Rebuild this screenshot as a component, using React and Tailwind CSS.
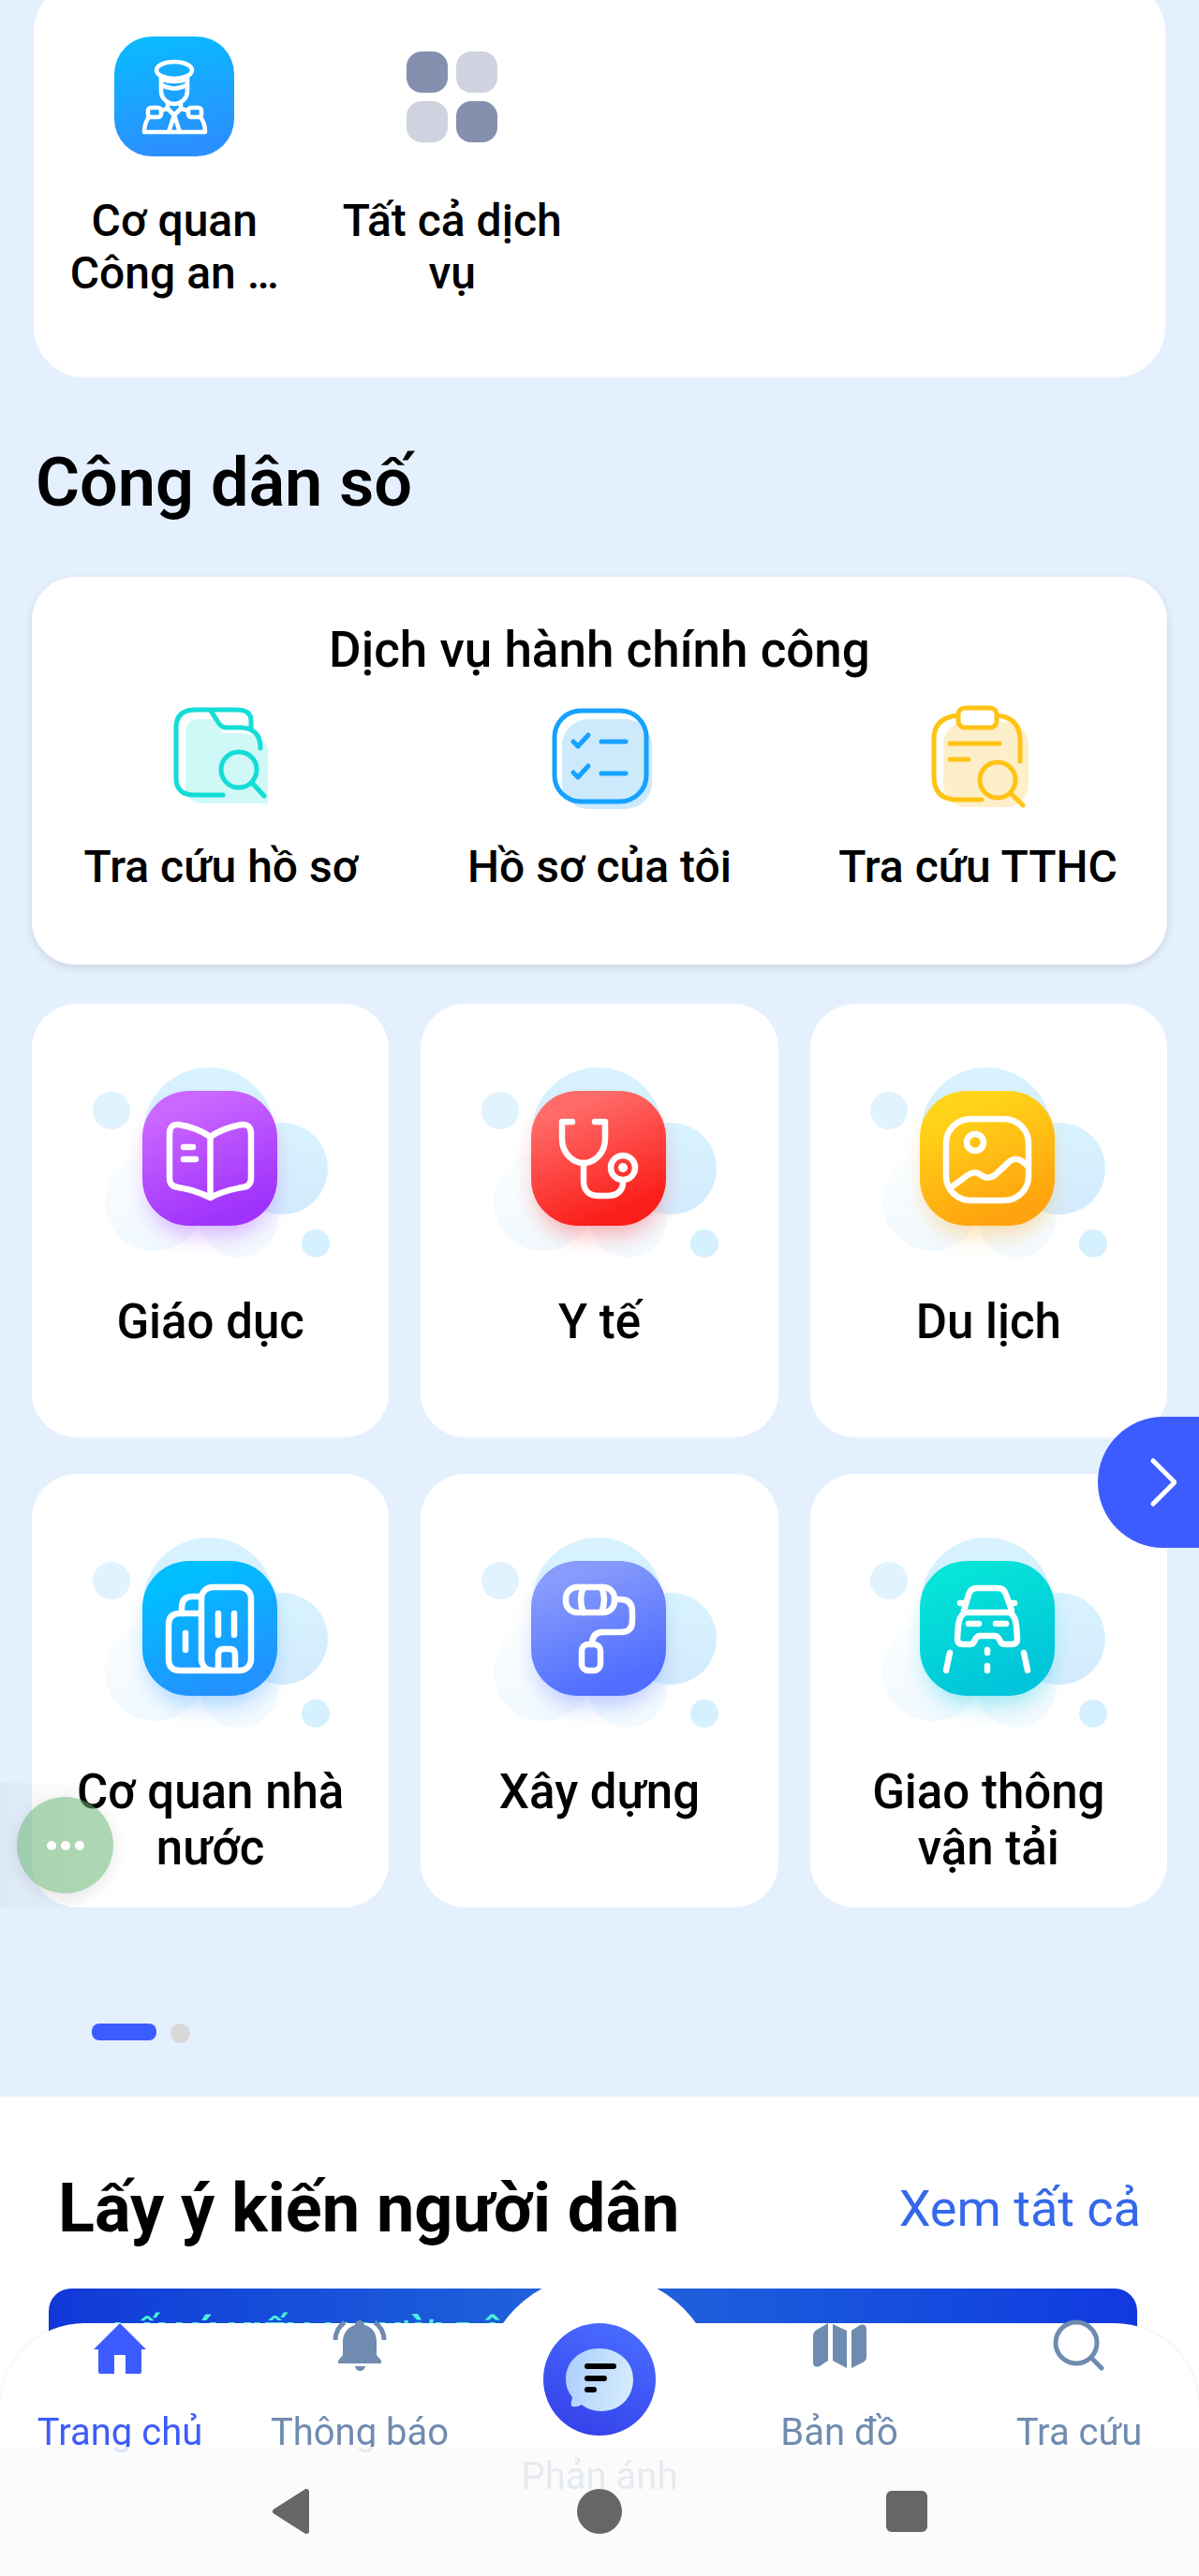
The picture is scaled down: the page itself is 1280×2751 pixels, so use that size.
import React from "react";

const services = [
  { label: "Giáo dục", from: "#cb66ff", to: "#a033fb", art: <BookArt /> },
  { label: "Y tế", from: "#ff6b68", to: "#fb1e1a", art: <StethoscopeArt /> },
  { label: "Du lịch", from: "#ffd51a", to: "#ffa30e", art: <PhotoArt /> },
  { label: "Cơ quan nhà nước", from: "#00bfff", to: "#2292ff", art: <BuildingArt /> },
  { label: "Xây dựng", from: "#869bfb", to: "#4f6dff", art: <RollerArt /> },
  { label: "Giao thông vận tải", from: "#06e3d8", to: "#01c5da", art: <CarArt /> },
];

function BookArt() {
  return (
    <>
      <path d="M189.5 142C178 134 168 131 156 129Q146 128 146 139V186Q146 195 155 196Q174 199 189.5 207Q205 199 224 196Q233 195 233 186V139Q233 128 223 129C211 131 201 134 189.5 142V207" />
      <path d="M161 153H171M161 166H174" />
    </>
  );
}

function StethoscopeArt() {
  return (
    <>
      <path d="M161 126H150V144C150 160 162 170 173 170C184 170 196 160 196 144V126H185" />
      <path d="M173 170V190C173 200 180 205 189 205H199C209 205 215 199 215 191" />
      <circle cx="215" cy="175" r="13" />
      <circle cx="215" cy="175" r="5" fill="#fff" stroke="none" />
    </>
  );
}

function PhotoArt() {
  return (
    <>
      <rect x="145" y="123" width="88" height="87" rx="26" />
      <circle cx="176" cy="148" r="9" />
      <path d="M149 197L168 183Q175 178 181 182L184 184Q190 188 197 183L212 169Q219 163 226 168L232 173" />
    </>
  );
}

function BuildingArt() {
  return (
    <>
      <rect x="180" y="121" width="53" height="89" rx="12" />
      <path d="M180 149H157Q145 149 145 161V198Q145 210 157 210H192" />
      <path d="M159 149V143Q159 131 170 131H180" />
      <path d="M198 149V172M215 149V172M163 170V188" />
      <path d="M198 210V193Q198 187 204 187H210Q216 187 216 193V210" />
    </>
  );
}

function RollerArt() {
  return (
    <>
      <rect x="154" y="121" width="52" height="27" rx="12" />
      <path d="M173 121Q167 134 173 148M192 121Q198 134 192 148" />
      <path d="M207 134H212Q225 134 225 147V157Q225 169 213 169H194Q182 169 182 182" />
      <rect x="171" y="182" width="20" height="28" rx="7" />
    </>
  );
}

function CarArt() {
  return (
    <>
      <path d="M164 146L169 129Q171 122 178 122H200Q207 122 209 129L215 146" />
      <path d="M165 148H213Q219 152 220 162L221 176Q221 182 215 182H208Q204 182 203 179L202 177Q200 173 197 173H181Q178 173 176 177L175 179Q174 182 170 182H163Q157 182 157 176L158 162Q159 152 165 148Z" />
      <path d="M160 138H165M218 138H213M169 160H180M198 160H209" />
      <path d="M149 191L145 210M228 191L232 210M189 188V191M189 205V210" />
    </>
  );
}

function ServiceArt({ id, from, to, children }) {
  return (
    <svg aria-hidden="true" viewBox="50 60 280 220" className="h-[220px] w-[280px]">
      <defs>
        <linearGradient id={`tile-${id}`} x1="0.3" y1="0" x2="0.7" y2="1">
          <stop offset="0.1" stopColor={from} />
          <stop offset="0.9" stopColor={to} />
        </linearGradient>
        <linearGradient id={`blob-${id}`} x1="0" y1="0" x2="0" y2="1">
          <stop offset="0" stopColor="#d8f3ff" />
          <stop offset="1" stopColor="#d3ebfd" />
        </linearGradient>
        <linearGradient id={`pale-${id}`} x1="0" y1="0" x2="0" y2="1">
          <stop offset="0" stopColor="#fbfeff" />
          <stop offset="1" stopColor="#f1f9ff" />
        </linearGradient>
        <filter id={`glow-${id}`} x="-40%" y="-40%" width="180%" height="180%">
          <feGaussianBlur stdDeviation="12" />
        </filter>
      </defs>
      <circle cx="84" cy="114" r="20" fill="#e0f3fe" />
      <circle cx="130" cy="211" r="53" fill={`url(#pale-${id})`} />
      <circle cx="220" cy="229" r="42" fill="#f3faff" />
      <circle cx="188" cy="138" r="70" fill={`url(#blob-${id})`} />
      <circle cx="266" cy="176" r="49" fill={`url(#blob-${id})`} />
      <circle cx="302" cy="256" r="15" fill="#d5f0fe" />
      <rect x="123" y="112" width="132" height="134" rx="46" fill={to} opacity="0.36" filter={`url(#glow-${id})`} />
      <rect x="117" y="93" width="144" height="144" rx="50" fill={`url(#tile-${id})`} />
      <g fill="none" stroke="#fff" strokeWidth="6.5" strokeLinecap="round" strokeLinejoin="round">
        {children}
      </g>
    </svg>
  );
}

function PoliceIcon() {
  return (
    <svg aria-hidden="true" viewBox="0 0 128 128" className="size-32">
      <defs>
        <linearGradient id="police" x1="0" y1="0" x2="0.2" y2="1">
          <stop offset="0" stopColor="#08bdff" />
          <stop offset="1" stopColor="#2a90ff" />
        </linearGradient>
      </defs>
      <rect width="128" height="128" rx="40" fill="url(#police)" />
      <g fill="none" stroke="#fff" strokeWidth="4.6" strokeLinecap="round" strokeLinejoin="round">
        <ellipse cx="64" cy="36" rx="19" ry="9" />
        <path d="M50 42V58C50 67 58 72 64 72C70 72 78 67 78 58V42" />
        <path d="M51 46Q64 50 77 46M51 52Q64 59 77 52" />
        <path d="M57 70V77L64 84L71 77V70M57 77L50 79M71 77L78 79" />
        <rect x="36" y="76" width="14" height="10" rx="3" />
        <rect x="79" y="76" width="14" height="10" rx="3" />
        <path d="M37 86Q32 93 32 102H97Q97 93 92 86M64 84L58 102M64 84L70 102" />
      </g>
    </svg>
  );
}

function AllServicesIcon() {
  return (
    <div aria-hidden="true" className="grid size-32 grid-cols-[44px_44px] grid-rows-[44px_44px] place-content-center gap-[9px]">
      <span className="rounded-2xl bg-[#858fae]" />
      <span className="rounded-2xl bg-[#cfd3df]" />
      <span className="rounded-2xl bg-[#cfd3df]" />
      <span className="rounded-2xl bg-[#858fae]" />
    </div>
  );
}

function FolderIcon() {
  return (
    <svg aria-hidden="true" viewBox="0 0 112 112" className="size-28">
      <path d="M18 30Q18 15 33 15H48L58 30H76Q106 32 106 50V105H38Q18 105 18 86Z" fill="#cff8f6" />
      <g fill="none" stroke="#14dcd6" strokeWidth="5" strokeLinecap="round" strokeLinejoin="round">
        <path d="M58 96H28Q8 96 8 78V24Q8 5 28 5H72Q88 5 88 16V24" />
        <path d="M45 6L54 20Q57 24 62 24H78Q98 25 98 46" />
        <circle cx="75" cy="69" r="19" />
        <path d="M89 83L102 97" />
      </g>
    </svg>
  );
}

function ChecklistIcon() {
  return (
    <svg aria-hidden="true" viewBox="0 0 112 112" className="size-28">
      <rect x="16" y="15" width="96" height="96" rx="28" fill="#cdeafd" />
      <g fill="none" stroke="#16a2ff" strokeWidth="5" strokeLinecap="round" strokeLinejoin="round">
        <rect x="8" y="6" width="98" height="97" rx="28" />
        <path d="M28 39L33 44L44 32M58 39H84M28 72L33 77L44 65M58 73H84" />
      </g>
    </svg>
  );
}

function ClipboardIcon() {
  return (
    <svg aria-hidden="true" viewBox="0 0 112 112" className="size-28">
      <rect x="19" y="18" width="91" height="91" rx="24" fill="#feefcb" />
      <g fill="none" stroke="#ffc315" strokeWidth="5" strokeLinecap="round" strokeLinejoin="round">
        <path d="M60 101H34Q9 101 9 76V36Q9 14 34 11M76 11Q101 13 101 38V60" />
        <rect x="35" y="3" width="41" height="21" rx="7" fill="#fff" />
        <path d="M26 41H79M26 58H46" />
        <circle cx="77" cy="80" r="19" />
        <path d="M91 94L104 107" />
      </g>
    </svg>
  );
}

const tabs = [
  {
    label: "Trang chủ",
    active: true,
    icon: <path d="M28 4L56 32H51V56Q51 58 49 58H34V38H22V58H7Q5 58 5 56V32H0Z" fill="currentColor" />,
  },
  {
    label: "Thông báo",
    icon: (
      <g fill="currentColor">
        <path d="M28 1C31 1 33 3 33 6C42 8 46 15 46 24V38L51 44V47H5V44L10 38V24C10 15 15 8 23 6C23 3 25 1 28 1Z" />
        <path d="M23 50H34Q33 55 28 55Q24 55 23 50Z" />
        <path d="M12 3Q2 10 2 22M44 3Q54 10 54 22" fill="none" stroke="currentColor" strokeWidth="5" />
      </g>
    ),
  },
  null,
  {
    label: "Bản đồ",
    icon: (
      <g fill="currentColor">
        <path d="M16 4V44L7 50Q0 52 0 46V18Q0 13 4 11Z" />
        <path d="M21 5L36 12V52L21 44Z" />
        <path d="M41 12L50 6Q57 4 57 11V40Q57 44 53 46L41 52Z" />
      </g>
    ),
  },
  {
    label: "Tra cứu",
    icon: (
      <g fill="none" stroke="currentColor" strokeWidth="5" strokeLinecap="round">
        <circle cx="25" cy="25" r="22" />
        <path d="M41 41L52 52" />
      </g>
    ),
  },
];

function FeedbackIcon() {
  return (
    <svg aria-hidden="true" viewBox="0 0 120 120" className="size-[120px]">
      <defs>
        <linearGradient id="fb" x1="0.7" y1="0" x2="0.3" y2="1">
          <stop offset="0" stopColor="#4a6cff" />
          <stop offset="1" stopColor="#3442ea" />
        </linearGradient>
        <linearGradient id="bubble" x1="0" y1="0" x2="1" y2="0.2">
          <stop offset="0" stopColor="#a9cdfd" />
          <stop offset="1" stopColor="#d3eafd" />
        </linearGradient>
      </defs>
      <circle cx="60" cy="60" r="60" fill="url(#fb)" />
      <path d="M60 27C79 27 96 40 96 60C96 80 81 94 62 94C53 94 46 91 41 87Q36 90 31 89Q29 88 30 84L31 79Q24 71 24 60C24 40 40 27 60 27Z" fill="url(#bubble)" />
      <path d="M47 46H75M47 59H65M47 71H54" fill="none" stroke="#000" strokeWidth="6" strokeLinecap="round" />
    </svg>
  );
}

function TabBar() {
  return (
    <nav className="fixed inset-x-0 bottom-0 h-[270px]">
      <div className="absolute left-1/2 top-[-53px] size-[254px] -translate-x-1/2 rounded-full bg-white" />
      <div className="absolute inset-0 rounded-t-[90px] bg-white shadow-[0_0_3px_rgba(0,0,0,0.12)] [clip-path:inset(0)]" />
      <div className="relative grid grid-cols-5 text-[40px] leading-12">
        {tabs.map((tab) =>
          tab ? (
            <a
              key={tab.label}
              href="#"
              className={
                tab.active
                  ? "-mt-1 flex flex-col items-center gap-[37px] text-[#3d5cff]"
                  : "-mt-1 flex flex-col items-center gap-[37px] text-[#6f8bb0]"
              }
            >
              <svg aria-hidden="true" viewBox="0 0 56 60" className="h-15 w-14 overflow-visible">
                {tab.icon}
              </svg>
              {tab.label}
            </a>
          ) : (
            <a key="feedback" href="#" className="flex flex-col items-center gap-5 text-[#6f8bb0]">
              <FeedbackIcon />
              Phản ánh
            </a>
          )
        )}
      </div>
      <div className="absolute inset-x-0 bottom-0 grid h-[138px] grid-cols-[repeat(3,328px)] items-center justify-center justify-items-center bg-[#fafafa]/85 text-[#666]">
        <button type="button" aria-label="Quay lại">
          <svg viewBox="0 0 48 48" className="size-12">
            <path d="M39 3V45L6 24Z" fill="currentColor" stroke="currentColor" strokeWidth="6" strokeLinejoin="round" />
          </svg>
        </button>
        <button type="button" aria-label="Màn hình chính">
          <span className="block size-12 rounded-full bg-[#666]" />
        </button>
        <button type="button" aria-label="Ứng dụng gần đây">
          <span className="block size-11 rounded-md bg-[#666]" />
        </button>
      </div>
    </nav>
  );
}

export default function App() {
  return (
    <div className="relative min-h-screen overflow-hidden bg-white font-['Roboto',sans-serif] text-black">
      <main>
        <div className="bg-[#e5f0ff] px-[34px] pb-[57px]">
          <section className="mx-0.5 -mt-5 grid grid-cols-4 rounded-[54px] bg-white pb-[83px] pl-0.5 pr-5 pt-[59px] text-center text-[48px] font-medium leading-14">
            <a href="#" className="flex flex-col items-center gap-[41px] px-4">
              <PoliceIcon />
              <span>
                Cơ quan
                <br />
                Công an …
              </span>
            </a>
            <a href="#" className="flex flex-col items-center gap-[41px] px-4">
              <AllServicesIcon />
              <span>Tất cả dịch vụ</span>
            </a>
          </section>

          <h2 className="ml-1 mt-[71px] text-[72px] font-semibold leading-[84px]">Công dân số</h2>

          <section className="mt-[58px] rounded-[46px] bg-white pb-[76px] pt-[46px] text-center shadow-[0_3px_8px_rgba(0,0,0,0.12)]">
            <h3 className="text-[53px] font-medium leading-16">Dịch vụ hành chính công</h3>
            <div className="mt-[27px] grid grid-cols-3 text-[48px] font-medium leading-14">
              <a href="#" className="flex flex-col items-center gap-[33px]">
                <FolderIcon />
                Tra cứu hồ sơ
              </a>
              <a href="#" className="flex flex-col items-center gap-[33px]">
                <ChecklistIcon />
                Hồ sơ của tôi
              </a>
              <a href="#" className="flex flex-col items-center gap-[33px]">
                <ClipboardIcon />
                Tra cứu TTHC
              </a>
            </div>
          </section>

          <section className="relative mt-[42px]">
            <div className="grid grid-cols-3 gap-x-[34px] gap-y-[39px]">
              {services.map((s, i) => (
                <a
                  key={s.label}
                  href="#"
                  className="flex min-h-[463px] flex-col items-center gap-[30px] rounded-[48px] bg-white px-8 pt-[60px] text-center text-[51px] font-medium leading-15"
                >
                  <ServiceArt id={i} from={s.from} to={s.to}>
                    {s.art}
                  </ServiceArt>
                  <span>{s.label}</span>
                </a>
              ))}
            </div>
            <button
              type="button"
              aria-label="Trang sau"
              className="absolute -right-[34px] top-[441px] flex h-[140px] w-[108px] items-center justify-center rounded-l-full bg-[#3d5cff] pl-8"
            >
              <svg viewBox="0 0 28 52" className="h-13 w-7" fill="none" stroke="#fff" strokeWidth="5" strokeLinecap="round" strokeLinejoin="round">
                <path d="M3 3L26 26L3 49" />
              </svg>
            </button>
            <div className="absolute -left-[34px] top-[832px] flex h-[133px] w-[121px] items-center justify-end rounded-br-[60px] bg-gradient-to-r from-black/[0.03] to-transparent">
              <button
                type="button"
                aria-label="Thêm"
                className="flex size-[103px] items-center justify-center gap-[5px] rounded-full bg-[#6ab573]/55 shadow-[0_4px_18px_rgba(0,0,0,0.1)]"
              >
                <span className="size-2.5 rounded-full bg-white" />
                <span className="size-2.5 rounded-full bg-white" />
                <span className="size-2.5 rounded-full bg-white" />
              </button>
            </div>
          </section>

          <div className="ml-16 mt-[124px] flex gap-[15px]">
            <span className="h-[18px] w-[69px] rounded-lg bg-[#3d5cff]" />
            <span className="size-[21px] rounded-full bg-[#d8d8d8]" />
          </div>
        </div>

        <section className="pt-[78px]">
          <div className="flex items-center justify-between px-[62px]">
            <h2 className="text-[72px] font-bold leading-[84px]">Lấy ý kiến người dân</h2>
            <a href="#" className="text-[54px] leading-16 text-[#3568ea]">
              Xem tất cả
            </a>
          </div>
          <div className="ml-[52px] mr-[66px] mt-[43px] h-[306px] rounded-t-3xl bg-gradient-to-r from-[#1238d8] via-[#2364da] to-[#1238e0] pl-[68px] pt-7">
            <p className="text-[42px] font-bold leading-12 text-[#4df0dc]">LẤY Ý KIẾN NGƯỜI DÂN</p>
          </div>
        </section>
      </main>
      <TabBar />
    </div>
  );
}
